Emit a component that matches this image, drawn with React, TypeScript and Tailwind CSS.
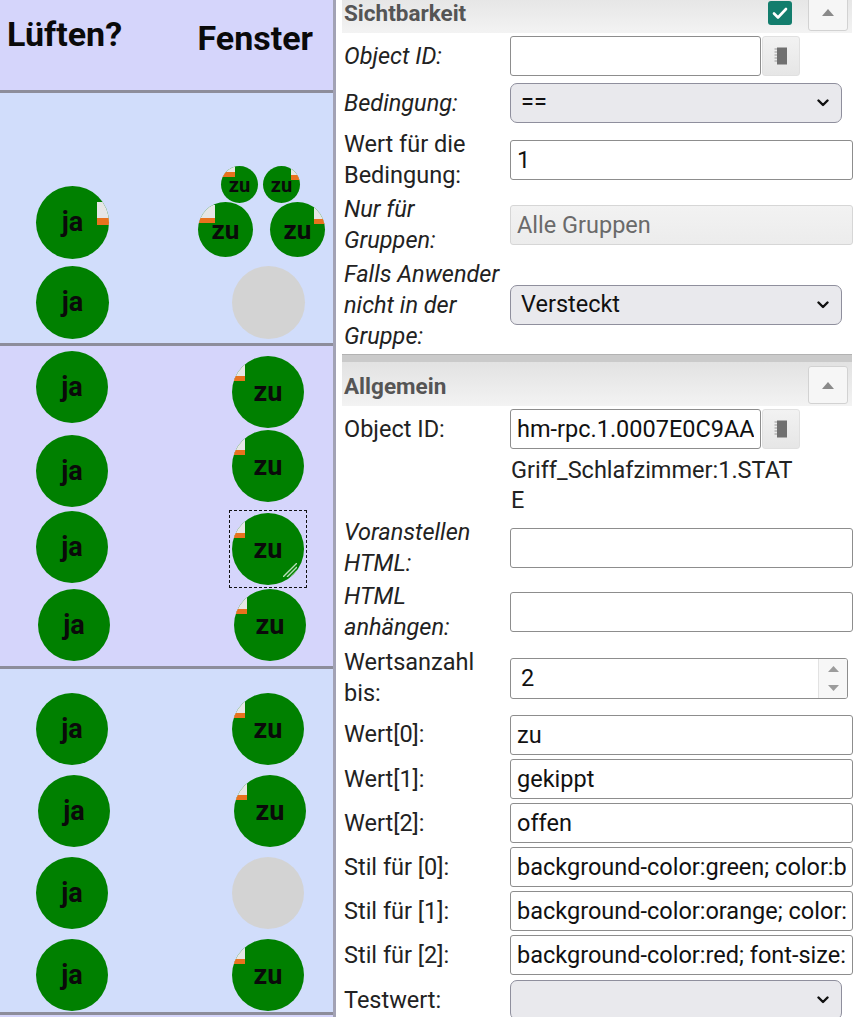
import clsx from 'clsx';
import type { ReactNode } from 'react';

// small grey/orange marker in the corner of a widget
function Tag({ className }: { className: string }) {
  return <div className={clsx('absolute bg-[#e6e6e6] border-b-[5px] border-[#e8721e]', className)} />;
}

function Bulb({ text, className, children }: { text?: string; className: string; children?: ReactNode }) {
  return (
    <div
      className={clsx(
        'relative shrink-0 rounded-full overflow-hidden flex items-center justify-center font-bold text-[#0a0a0a] leading-none',
        text ? 'bg-[#008000]' : 'bg-[#d3d3d3]',
        className,
      )}
    >
      {children}
      {text && <span className="relative">{text}</span>}
    </div>
  );
}

function ZuTag() {
  return <Tag className="left-0 top-[6px] w-[13px] h-[19px]" />;
}

function Row({ className, left, right }: { className: string; left: ReactNode; right: ReactNode }) {
  return (
    <div className={clsx('flex items-start', className)}>
      {left}
      <div className="ml-[124px]">{right}</div>
    </div>
  );
}

function Canvas() {
  return (
    <div className="w-[336px] shrink-0 flex flex-col border-r-[3px] border-[#a2a2b4] bg-[#d5d5fb]">
      <div className="h-[93px] flex items-start justify-between pl-[7px] pr-[20px] border-b-[3px] border-[#8d8d9b] text-[34px] leading-[40px] font-bold text-[#0a0a0a]">
        <span className="mt-[14px]">Lüften?</span>
        <span className="mt-[18px]">Fenster</span>
      </div>

      <div className="h-[253px] flex bg-[#d1ddfb] border-b-[3px] border-[#8d8d9b]">
        <div className="ml-[36px] mt-[93px] flex flex-col gap-[7px]">
          <Bulb text="ja" className="size-[73px] text-[27px]">
            <Tag className="right-0 top-[16px] w-[12px] h-[23px] border-b-[7px]" />
          </Bulb>
          <Bulb text="ja" className="size-[73px] text-[27px]" />
        </div>
        <div className="ml-[89px] mt-[73px] flex flex-col">
          <div className="flex gap-[5px] ml-[23px]">
            <Bulb text="zu" className="size-[37px] text-[20px]">
              <Tag className="left-0 top-0 w-[14px] h-[11px] border-b-[4px]" />
            </Bulb>
            <Bulb text="zu" className="size-[37px] text-[20px]">
              <Tag className="right-0 top-[2px] w-[9px] h-[12px] border-b-[4px]" />
            </Bulb>
          </div>
          <div className="flex gap-[17px] -mt-[1px]">
            <Bulb text="zu" className="size-[55px] text-[26px]">
              <Tag className="left-0 top-[3px] w-[17px] h-[18px]" />
            </Bulb>
            <Bulb text="zu" className="size-[55px] text-[26px]">
              <Tag className="right-0 top-[5px] w-[11px] h-[17px]" />
            </Bulb>
          </div>
          <Bulb className="size-[73px] ml-[34px] mt-[9px]" />
        </div>
      </div>

      <div className="h-[323px] flex flex-col pl-[36px] bg-[#d5d5fb] border-b-[3px] border-[#8d8d9b]">
        <Row
          className="mt-[5px]"
          left={<Bulb text="ja" className="size-[72px] text-[27px]" />}
          right={
            <Bulb text="zu" className="size-[72px] text-[27px] mt-[5px]">
              <ZuTag />
            </Bulb>
          }
        />
        <Row
          className="mt-[2px]"
          left={<Bulb text="ja" className="size-[72px] text-[27px] mt-[5px]" />}
          right={
            <Bulb text="zu" className="size-[72px] text-[27px]">
              <ZuTag />
            </Bulb>
          }
        />
        <Row
          className="mt-[4px]"
          left={<Bulb text="ja" className="size-[72px] text-[27px]" />}
          right={
            <div className="relative mt-[2px]">
              <Bulb text="zu" className="size-[72px] text-[27px]">
                <ZuTag />
                <svg className="absolute right-[7px] bottom-[8px]" width="14" height="14" viewBox="0 0 14 14">
                  <path d="M14 0L0 14M14 4L4 14M14 8L8 14M14 12L12 14" stroke="#b9dcb9" strokeWidth="1.4" />
                </svg>
              </Bulb>
              <div className="absolute -inset-[3px] border border-dashed border-[#111]" />
            </div>
          }
        />
        <Row
          className="mt-[4px] ml-[2px]"
          left={<Bulb text="ja" className="size-[72px] text-[27px]" />}
          right={
            <Bulb text="zu" className="size-[72px] text-[27px]">
              <ZuTag />
            </Bulb>
          }
        />
      </div>

      <div className="h-[346px] flex flex-col pl-[36px] bg-[#d1ddfb] border-b-[3px] border-[#8d8d9b]">
        <Row
          className="mt-[24px]"
          left={<Bulb text="ja" className="size-[72px] text-[27px]" />}
          right={
            <Bulb text="zu" className="size-[72px] text-[27px]">
              <ZuTag />
            </Bulb>
          }
        />
        <Row
          className="mt-[10px] ml-[2px]"
          left={<Bulb text="ja" className="size-[72px] text-[27px]" />}
          right={
            <Bulb text="zu" className="size-[72px] text-[27px]">
              <ZuTag />
            </Bulb>
          }
        />
        <Row
          className="mt-[10px]"
          left={<Bulb text="ja" className="size-[72px] text-[27px]" />}
          right={<Bulb className="size-[72px]" />}
        />
        <Row
          className="mt-[10px]"
          left={<Bulb text="ja" className="size-[72px] text-[27px]" />}
          right={
            <Bulb text="zu" className="size-[72px] text-[27px]">
              <ZuTag />
            </Bulb>
          }
        />
      </div>
      <div className="flex-1" />
    </div>
  );
}

function GroupHeader({ title, checkbox, className }: { title: string; checkbox?: boolean; className?: string }) {
  return (
    <div className={clsx('flex items-start h-[44px] bg-linear-to-b from-[#e2e2e2] to-[#f3f3f3]', className)}>
      <div className="pt-[9px] pl-[2px] text-[22.5px] leading-[31px] font-bold text-[#555]">{title}</div>
      <div className="ml-auto flex items-start">
        {checkbox && (
          <div className="mt-[12px] mr-[16px] size-[24px] rounded-[3px] bg-[#137d6d] flex items-center justify-center">
            <svg width="16" height="13" viewBox="0 0 16 13">
              <path d="M2 6.5l4 4L14 2" fill="none" stroke="#fff" strokeWidth="2.6" strokeLinecap="round" strokeLinejoin="round" />
            </svg>
          </div>
        )}
        <div className="mt-[4px] mr-[4px] w-[40px] h-[38px] border border-[#d2d2d2] rounded-[3px] bg-[#f6f6f6] flex items-center justify-center">
          <svg width="12" height="7" viewBox="0 0 12 7">
            <path d="M0 7L6 0l6 7z" fill="#8a8a8a" />
          </svg>
        </div>
      </div>
    </div>
  );
}

function Label({ children, italic, className }: { children: ReactNode; italic?: boolean; className?: string }) {
  return (
    <div className={clsx('w-[168px] shrink-0 pl-[2px] pr-[8px] text-[23.5px] leading-[31px] text-[#222]', italic && 'italic', className)}>
      {children}
    </div>
  );
}

function TextBox({ value = '', disabled, short }: { value?: string; disabled?: boolean; short?: boolean }) {
  return (
    <input
      readOnly
      value={value}
      className={clsx(
        'h-[40px] shrink-0 border rounded-[3px] px-[6px] text-[23.5px] outline-none',
        short ? 'w-[251px]' : 'w-[343px]',
        disabled
          ? 'border-[#d6d6d6] bg-linear-to-b from-[#f2f2f2] to-[#ececec] text-[#6a6a6a]'
          : 'border-[#8d8d8d] bg-white text-[#111]',
      )}
    />
  );
}

function Dropdown({ value = '' }: { value?: string }) {
  return (
    <div className="h-[40px] w-[332px] shrink-0 border border-[#8f8f9d] rounded-[7px] bg-[#e9e9ed] flex items-center pl-[10px] pr-[12px] text-[23.5px] text-[#111]">
      <span className="flex-1">{value}</span>
      <svg width="12" height="8" viewBox="0 0 12 8">
        <path d="M1.5 1.5L6 6l4.5-4.5" fill="none" stroke="#111" strokeWidth="2.4" strokeLinecap="round" strokeLinejoin="round" />
      </svg>
    </div>
  );
}

function BrowseButton() {
  return (
    <div className="ml-[1px] w-[38px] h-[40px] shrink-0 rounded-[3px] border border-[#e0e0e0] bg-linear-to-b from-[#f2f2f2] to-[#e6e6e6] flex items-center justify-center">
      <svg width="16" height="18" viewBox="0 0 16 18">
        <rect x="4" y="0.5" width="10" height="17" fill="#707070" />
        <path d="M1.5 2h2.5M1.5 5h2.5M1.5 8h2.5M1.5 11h2.5M1.5 14h2.5" stroke="#9a9a9a" strokeWidth="1.2" />
      </svg>
    </div>
  );
}

function NumberBox({ value }: { value: string }) {
  return (
    <div className="h-[41px] w-[338px] shrink-0 border border-[#8d8d8d] rounded-[3px] bg-white flex overflow-hidden">
      <span className="flex-1 pl-[10px] text-[23.5px] leading-[39px] text-[#111]">{value}</span>
      <div className="w-[29px] border-l border-[#e2e2e2] bg-[#f7f7f7] flex flex-col items-center justify-center gap-[13px]">
        <svg width="11" height="6" viewBox="0 0 11 6">
          <path d="M0 6L5.5 0 11 6z" fill="#9c9c9c" />
        </svg>
        <svg width="11" height="6" viewBox="0 0 11 6">
          <path d="M0 0L5.5 6 11 0z" fill="#9c9c9c" />
        </svg>
      </div>
    </div>
  );
}

function Field({ className, children }: { className: string; children: ReactNode }) {
  return <div className={clsx('flex items-center', className)}>{children}</div>;
}

function Inspector() {
  return (
    <div className="w-[520px] shrink-0 overflow-hidden bg-white pl-[6px] pr-[4px]">
      <GroupHeader title="Sichtbarkeit" checkbox className="-mt-[11px]" />
      <Field className="h-[44px] mt-[1px]">
        <Label italic>Object ID:</Label>
        <TextBox short />
        <BrowseButton />
      </Field>
      <Field className="h-[50px]">
        <Label italic>Bedingung:</Label>
        <Dropdown value="==" />
      </Field>
      <Field className="h-[64px]">
        <Label>Wert für die Bedingung:</Label>
        <TextBox value="1" />
      </Field>
      <Field className="h-[65px]">
        <Label italic>Nur für Gruppen:</Label>
        <TextBox value="Alle Gruppen" disabled />
      </Field>
      <Field className="h-[96px]">
        <Label italic>Falls Anwender nicht in der Gruppe:</Label>
        <Dropdown value="Versteckt" />
      </Field>
      <div className="mt-[1px] h-[8px] bg-[#cacaca] border-t border-[#b2b2b2]" />

      <GroupHeader title="Allgemein" />
      <div className="flex items-start h-[110px] pt-[3px]">
        <Label className="pt-[5px]">Object ID:</Label>
        <div className="flex flex-col">
          <div className="flex">
            <TextBox value="hm-rpc.1.0007E0C9AA" short />
            <BrowseButton />
          </div>
          <div className="w-[288px] mt-[6px] pl-[1px] text-[23.5px] leading-[30px] text-[#222] break-all">
            Griff_Schlafzimmer:1.STATE
          </div>
        </div>
      </div>
      <Field className="h-[64px]">
        <Label italic>Voranstellen HTML:</Label>
        <TextBox />
      </Field>
      <Field className="h-[64px]">
        <Label italic>HTML anhängen:</Label>
        <TextBox />
      </Field>
      <Field className="h-[68px]">
        <Label>Wertsanzahl bis:</Label>
        <NumberBox value="2" />
      </Field>
      <Field className="h-[45px]">
        <Label>Wert[0]:</Label>
        <TextBox value="zu" />
      </Field>
      <Field className="h-[44px]">
        <Label>Wert[1]:</Label>
        <TextBox value="gekippt" />
      </Field>
      <Field className="h-[44px]">
        <Label>Wert[2]:</Label>
        <TextBox value="offen" />
      </Field>
      <Field className="h-[44px]">
        <Label>Stil für [0]:</Label>
        <TextBox value="background-color:green; color:black" />
      </Field>
      <Field className="h-[44px]">
        <Label>Stil für [1]:</Label>
        <TextBox value="background-color:orange; color:black" />
      </Field>
      <Field className="h-[44px]">
        <Label>Stil für [2]:</Label>
        <TextBox value="background-color:red; font-size:20px" />
      </Field>
      <Field className="h-[46px]">
        <Label>Testwert:</Label>
        <Dropdown />
      </Field>
    </div>
  );
}

export default function App() {
  return (
    <div className="w-[856px] h-[1017px] overflow-hidden flex bg-white font-['Roboto','Noto_Sans',sans-serif]">
      <Canvas />
      <Inspector />
    </div>
  );
}
